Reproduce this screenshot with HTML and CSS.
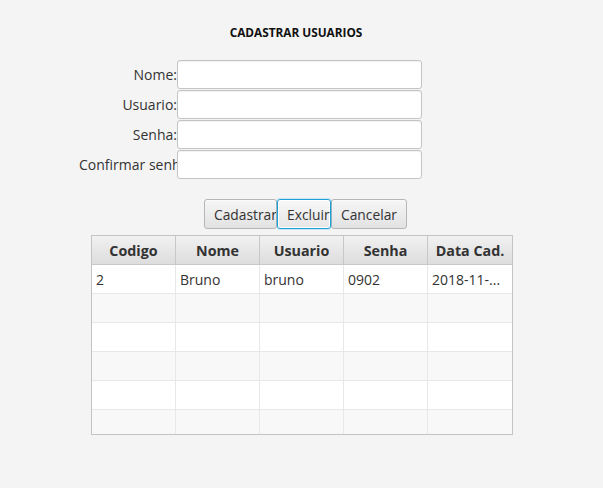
FILE: index.html
```html
<!DOCTYPE html>
<html>
<head>
<meta charset="utf-8">
<link rel="stylesheet" href="styles.css">
</head>
<body>
<div class="app">
  <h1 class="title">CADASTRAR USUARIOS</h1>
  <div class="form">
    <label class="lbl">Nome:</label><div class="field"></div>
    <label class="lbl">Usuario:</label><div class="field"></div>
    <label class="lbl">Senha:</label><div class="field"></div>
    <label class="lbl lbl-long">Confirmar senha:</label><div class="field"></div>
  </div>
  <div class="buttons">
    <button class="btn btn-cad">Cadastrar</button>
    <button class="btn btn-exc focused">Excluir</button>
    <button class="btn btn-can">Cancelar</button>
  </div>
  <div class="table">
    <div class="row head">
      <div class="cell">Codigo</div>
      <div class="cell">Nome</div>
      <div class="cell">Usuario</div>
      <div class="cell">Senha</div>
      <div class="cell">Data Cad.</div>
    </div>
    <div class="row odd">
      <div class="cell">2</div>
      <div class="cell">Bruno</div>
      <div class="cell">bruno</div>
      <div class="cell">0902</div>
      <div class="cell">2018-11-...</div>
    </div>
    <div class="row even"><div class="cell"></div><div class="cell"></div><div class="cell"></div><div class="cell"></div><div class="cell"></div></div>
    <div class="row odd"><div class="cell"></div><div class="cell"></div><div class="cell"></div><div class="cell"></div><div class="cell"></div></div>
    <div class="row even"><div class="cell"></div><div class="cell"></div><div class="cell"></div><div class="cell"></div><div class="cell"></div></div>
    <div class="row odd"><div class="cell"></div><div class="cell"></div><div class="cell"></div><div class="cell"></div><div class="cell"></div></div>
    <div class="row even"><div class="cell"></div><div class="cell"></div><div class="cell"></div><div class="cell"></div><div class="cell"></div></div>
  </div>
</div>
</body>
</html>
```

FILE: styles.css
```css
* { box-sizing: border-box; }
html, body {
  margin: 0;
  padding: 0;
  background: #f4f4f4;
}
body {
  font-family: "Open Sans", "Noto Sans", sans-serif;
  font-size: 14px;
  color: #333333;
  width: 603px;
  height: 488px;
  overflow: hidden;
}
.app {
  width: 592px;
  padding-top: 24px;
}
.title {
  margin: 0;
  height: 16px;
  line-height: 16px;
  font-size: 11.8px;
  font-weight: bold;
  text-align: center;
  color: #111;
}
.form {
  margin-top: 20px;
  margin-left: 79px;
  display: grid;
  grid-template-columns: 98px 245px;
  grid-auto-rows: 30px;
}
.lbl {
  display: block;
  text-align: right;
  white-space: nowrap;
  overflow: hidden;
  line-height: 30px;
}
.field {
  height: 29px;
  background: #ffffff;
  border: 1px solid #c4c4c4;
  border-radius: 3px;
  box-shadow: inset 0 1px 1px rgba(0,0,0,0.06);
}
.buttons {
  margin-top: 19px;
  margin-left: 204px;
  display: flex;
  height: 30px;
}
.btn {
  position: relative;
  height: 30px;
  padding: 0 0 0 9px;
  margin: 0;
  font-family: inherit;
  font-size: 13.8px;
  color: #333;
  text-align: left;
  white-space: nowrap;
  overflow: hidden;
  border: 1px solid #b6b6b6;
  border-radius: 3px;
  background: linear-gradient(#f6f6f6, #e2e2e2);
  box-shadow: inset 0 1px 0 #fbfbfb;
}
.btn-cad { width: 73px; }
.btn-exc { width: 54px; }
.btn-can { width: 76px; padding-left: 9px; }
.focused {
  z-index: 1;
  overflow: visible;
  border-color: #1ba1d9;
  background: linear-gradient(#f8f8f8, #e6e6e6);
  box-shadow: 0 0 0 1px rgba(27,161,217,0.18), inset 0 0 0 1px #ffffff;
}
.table {
  margin-top: 6px;
  margin-left: 91px;
  width: 422px;
  height: 200px;
  border: 1px solid #c4c4c4;
  overflow: hidden;
  background: #f8f8f8;
}
.row {
  display: grid;
  grid-template-columns: 84px 84px 84px 84px 84px;
  height: 29px;
  border-bottom: 1px solid #e8e8e8;
}
.row .cell {
  border-right: 1px solid #e8e8e8;
  line-height: 29px;
  padding-left: 4px;
  white-space: nowrap;
  overflow: hidden;
}
.row .cell:last-child { border-right: none; }
.odd { background: #ffffff; }
.even { background: #f8f8f8; }
.head {
  background: linear-gradient(#f1f1f1, #dddddd);
  border-bottom: 1px solid #c8c8c8;
}
.head .cell {
  font-weight: bold;
  font-size: 14.3px;
  text-align: center;
  padding-left: 0;
  border-right: 1px solid #c8c8c8;
}
```
